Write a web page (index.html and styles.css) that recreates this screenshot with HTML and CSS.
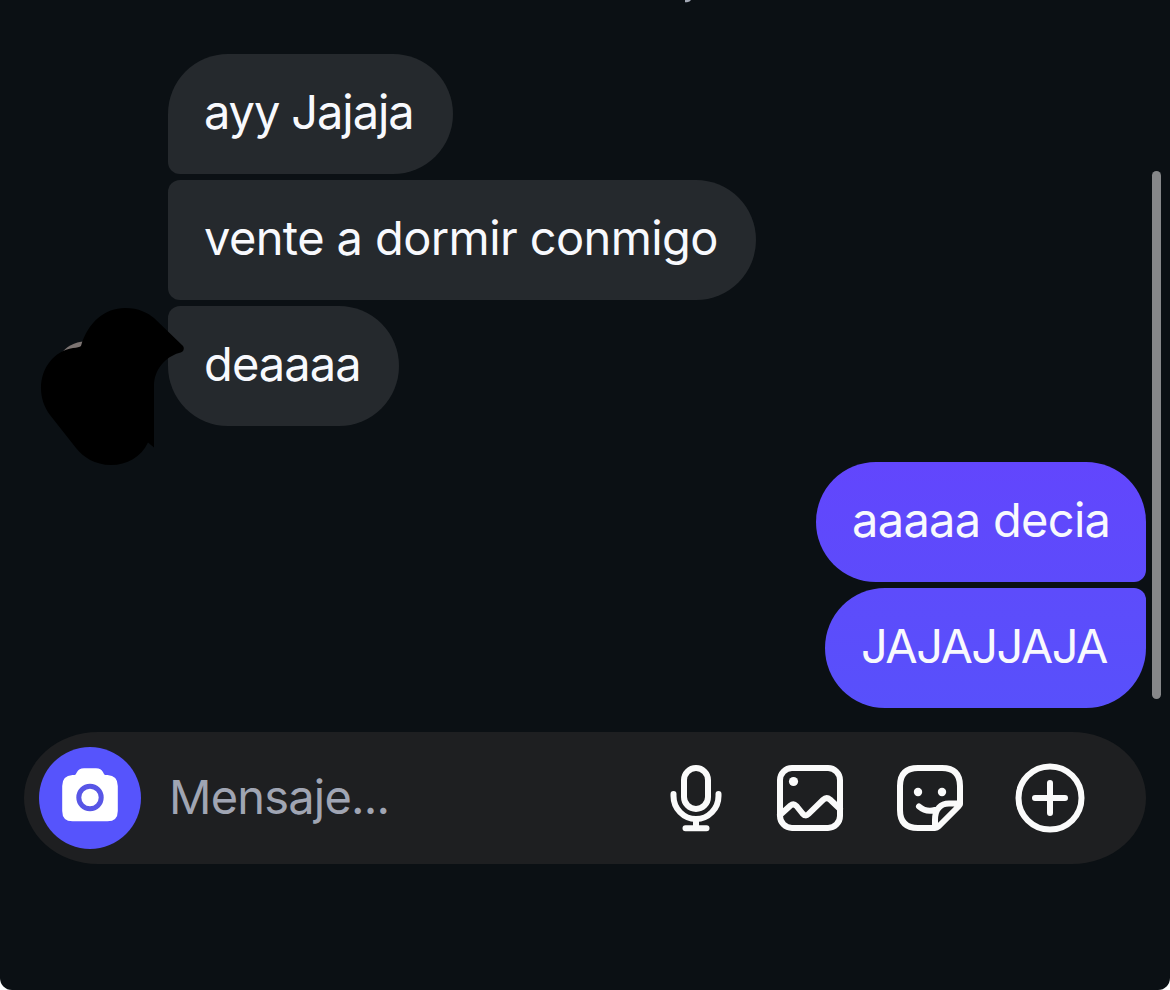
FILE: index.html
```html
<!DOCTYPE html>
<html lang="es">
<head>
    <meta charset="UTF-8">
    <meta name="viewport" content="width=device-width, initial-scale=1.0">
    <title>Mensajes</title>
    <link rel="stylesheet" href="styles.css">
</head>
<body>
    <div class="screen">
        <!-- Conversation -->
        <div class="chat">
            <div class="received">
                <div class="bubble first ayy"><span>ayy Jajaja</span></div>
                <div class="bubble middle vente"><span>vente a dormir conmigo</span></div>
                <div class="bubble last dea"><span>deaaaa</span></div>
            </div>
            <div class="sent">
                <div class="bubble first decia"><span>aaaaa decia</span></div>
                <div class="bubble last jaja"><span>JAJAJJAJA</span></div>
            </div>
        </div>

        <!-- Message input -->
        <div class="composer">
            <div class="camera">
                <svg width="56" height="54" viewBox="62 768 56 54">
                    <path fill="#fff" d="M72.500 775H74.500C77 775 76.500 768.300 84 768.300H96C103.500 768.300 103 775 105.500 775H107.500Q117.800 775.500 117.800 786V811Q117.800 821.300 107.500 821.300H72.500Q62.200 821.300 62.200 811V786Q62.200 775.500 72.500 775Z"/>
                    <circle cx="90" cy="797.500" r="11.200" fill="none" stroke="#5856e6" stroke-width="5"/>
                </svg>
            </div>
            <div class="placeholder">Mensaje...</div>
            <div class="icons">
                <svg width="54" height="70" viewBox="669 763 54 70">
                    <rect x="684" y="768" width="24" height="41" rx="12"/>
                    <path d="M673.500 794V796A22.500 23 0 0 0 718.500 796V794M696 819V828M685.500 828.300H706.500"/>
                </svg>
                <svg width="70" height="70" viewBox="775 763 70 70">
                    <rect x="780" y="768" width="60" height="60" rx="12"/>
                    <path d="M780 815L790.500 805.500Q793.500 803 796.500 806L802.500 813.500Q805.500 817 808.500 814L823 799.800Q826.500 796.500 830 799.500L840 809"/>
                    <circle class="dot" cx="793.500" cy="781.500" r="4.600"/>
                </svg>
                <svg width="70" height="70" viewBox="895 763 70 70">
                    <path d="M960 804V786Q960 768 942 768H918Q900 768 900 786V810Q900 828 918 828H935Q937 828 938.500 826.500L958.500 806.500Q960 805 960 804M919 806.500Q926 812.500 935 810M935 827V820C935 809 941 803.500 949 803.500H959"/>
                    <circle class="dot" cx="918" cy="792" r="4.200"/>
                    <circle class="dot" cx="942" cy="792" r="4.200"/>
                </svg>
                <svg width="70" height="70" viewBox="1015 763 70 70">
                    <circle cx="1050" cy="798" r="31.500"/>
                    <path d="M1035 798H1065M1050 783V813"/>
                </svg>
            </div>
        </div>

        <div class="scrollbar"></div>

        <!-- Tail of the text scrolled off the top -->
        <svg class="tail" width="8" height="3" viewBox="0 0 8 3">
            <path fill="#a3a8b5" d="M7 0Q6 2 3 2.200H1V0Z"/>
        </svg>

        <!-- Covered avatar -->
        <svg class="avatar" width="150" height="164" viewBox="38 304 150 164">
            <path fill="#7c7472" d="M60 355Q69 342 85 341.500V352Z"/>
            <path d="M81 346C88 322 105 308 125 308C139 308 148 313 154 318L182 345Q184.500 347 183.500 350Q183 352 179 353C165 357 154 370 154 386V447.500L148 442.500C141 457 127 465 111 465C95 465 83 457 76 448L50 415C44 407 41 398 41 388C41 368 54 351 73 348Q79 347.500 81 346Z"/>
        </svg>
    </div>
</body>
</html>
```
FILE: styles.css
```css
body {
    margin: 0;
    background: #fff;
    font-family: Inter, "Liberation Sans", sans-serif;
    font-size: 47px;
    font-weight: 370;
    color: #f8f9fd;
}

.screen {
    position: relative;
    box-sizing: border-box;
    height: 990px;
    padding: 54px 24px 0;
    overflow: hidden;
    background: #0b1014;
    border-radius: 0 0 12px 12px;
}

.chat,
.received,
.sent {
    display: flex;
    flex-direction: column;
}

.chat {
    gap: 36px;
}

.received,
.sent {
    gap: 6px;
}

.received {
    align-items: flex-start;
    padding-left: 144px;
}

.sent {
    align-items: flex-end;
}

.bubble {
    box-sizing: border-box;
    height: 120px;
    padding: 0 36px;
    line-height: 115px;
    white-space: nowrap;
    border-radius: 60px;
}

.received .bubble {
    background: #25292d;
}

.received .first {
    border-bottom-left-radius: 12px;
}

.received .middle {
    border-top-left-radius: 12px;
    border-bottom-left-radius: 12px;
}

.received .last {
    border-top-left-radius: 12px;
}

.sent .first {
    background: linear-gradient(#6246fd, #5d4bfb);
    border-bottom-right-radius: 12px;
}

.sent .last {
    background: linear-gradient(#5d4cfb, #5850fb);
    border-top-right-radius: 12px;
}

.ayy {
    width: 285px;
    letter-spacing: -1.1px;
}

.vente {
    width: 588px;
    letter-spacing: -0.6px;
}

.dea {
    width: 231px;
    letter-spacing: -0.9px;
}

.decia {
    width: 330px;
    letter-spacing: -0.7px;
}

.jaja {
    width: 321px;
    letter-spacing: -1.6px;
}

.composer {
    display: flex;
    align-items: center;
    box-sizing: border-box;
    height: 132px;
    margin-top: 24px;
    padding: 0 61px 0 15px;
    background: #1e1f21;
    border-radius: 74px / 66px;
}

.camera {
    display: flex;
    align-items: center;
    justify-content: center;
    width: 102px;
    height: 102px;
    background: #5654fc;
    border-radius: 50%;
}

.camera svg {
    margin-top: -6px;
}

.placeholder {
    margin-left: 28px;
    padding-bottom: 3px;
    letter-spacing: -0.8px;
    color: #a0a5b3;
}

.icons {
    display: flex;
    gap: 50px;
    margin-left: auto;
}

.icons svg {
    fill: none;
    stroke: #fafafa;
    stroke-width: 6;
    stroke-linecap: round;
    stroke-linejoin: round;
}

.icons svg:first-child {
    margin-right: 2px;
}

.icons .dot {
    fill: #fafafa;
    stroke: none;
}

.scrollbar {
    position: absolute;
    top: 171px;
    right: 9px;
    width: 9px;
    height: 528px;
    background: #868789;
    border-radius: 5px;
}

.tail {
    position: absolute;
    top: 0;
    left: 684px;
}

.avatar {
    position: absolute;
    top: 304px;
    left: 38px;
}
```
